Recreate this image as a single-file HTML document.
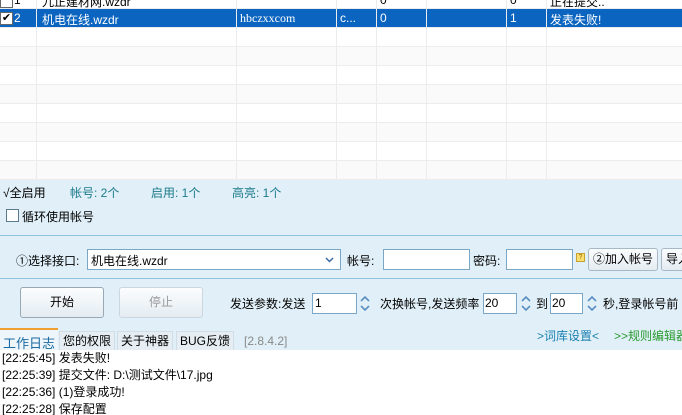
<!DOCTYPE html>
<html><head><meta charset="utf-8"><style>
*{margin:0;padding:0;box-sizing:border-box}
html,body{width:682px;height:415px;overflow:hidden}
body{background:#e1f0f8;font-family:"Liberation Sans","Noto Sans CJK SC",sans-serif;font-size:12px;color:#000;position:relative}
.a{position:absolute;white-space:nowrap}
.grid{position:absolute;left:0;top:0;width:682px;height:180px;background:#fff;overflow:hidden}
.row{position:absolute;left:0;width:682px;height:19px;border-bottom:1px solid #ececec}
.vl{position:absolute;top:0;width:1px;height:180px;background:#ececec}
.sel{background:#0a64c0;color:#fff}
.cb{position:absolute;width:13px;height:13px;border:1px solid #666;background:#fff}
.inp{position:absolute;height:21px;background:#fff;border:1px solid #7aa6c8}
.btn{position:absolute;border:1px solid #a8b8c4;border-radius:3px;background:linear-gradient(#fbfdfe,#e4ecf2);text-align:center}
.sp{position:absolute;width:14px;height:21px}
.tab{position:absolute;top:331px;height:20px;background:#e6eef3;border:1px solid #d0dde6;border-bottom:none;line-height:19px;padding:0 3px}
.log{position:absolute;left:0;top:350px;width:682px;height:65px;background:#fff;overflow:hidden}
.log div{height:17px;line-height:17px;padding-left:2px}
</style></head><body>
<div class="grid">
 <div class="row" style="top:-10px"></div>
 <div class="row sel" style="top:9px"></div>
 <div class="row" style="top:28px"></div>
 <div class="row" style="top:47px;background:#fafafa"></div>
 <div class="row" style="top:66px"></div>
 <div class="row" style="top:85px;background:#fafafa"></div>
 <div class="row" style="top:104px"></div>
 <div class="row" style="top:123px;background:#fafafa"></div>
 <div class="row" style="top:142px"></div>
 <div class="row" style="top:161px;background:#fafafa;height:19px"></div>
 <div class="vl" style="left:36px"></div><div class="vl" style="left:236px"></div><div class="vl" style="left:336px"></div><div class="vl" style="left:376px"></div><div class="vl" style="left:426px"></div><div class="vl" style="left:506px"></div><div class="vl" style="left:546px"></div>
 <div class="cb" style="left:0;top:-5px"></div>
 <div class="a" style="left:14px;top:-7px">1</div>
 <div class="a" style="left:42px;top:-7px">九正建材网.wzdr</div>
 <div class="a" style="left:380px;top:-7px">0</div>
 <div class="a" style="left:510px;top:-7px">0</div>
 <div class="a" style="left:550px;top:-7px">正在提交..</div>
 <div class="cb" style="left:0;top:12px;font-size:11px;line-height:11px;text-align:center;color:#000">✔</div>
 <div class="a" style="left:14px;top:11px;color:#fff">2</div>
 <div class="a" style="left:42px;top:11px;color:#fff">机电在线.wzdr</div>
 <div class="a" style="left:240px;top:11px;color:#fff;font-family:'Liberation Serif',serif">hbczxxcom</div>
 <div class="a" style="left:340px;top:11px;color:#fff">c...</div>
 <div class="a" style="left:380px;top:11px;color:#fff">0</div>
 <div class="a" style="left:510px;top:11px;color:#fff">1</div>
 <div class="a" style="left:550px;top:11px;color:#fff">发表失败!</div>
</div>
<div class="a" style="left:3px;top:184px">√全启用</div>
<div class="a" style="left:70px;top:184px;color:#1a7a8a">帐号: 2个</div>
<div class="a" style="left:151px;top:184px;color:#1a7a8a">启用: 1个</div>
<div class="a" style="left:232px;top:184px;color:#1a7a8a">高亮: 1个</div>
<div class="cb" style="left:6px;top:209px;border-color:#5a7a90"></div>
<div class="a" style="left:22px;top:208px">循环使用帐号</div>
<div class="a" style="left:0;top:235px;width:682px;height:1px;background:#8cc4dc"></div>
<div class="a" style="left:16px;top:252px">①选择接口:</div>
<div class="inp" style="left:87px;top:249px;width:254px;padding:2px 3px">机电在线.wzdr<svg style="position:absolute;right:6px;top:7px" width="9" height="6"><path d="M1 1L4.5 4.5L8 1" fill="none" stroke="#3a6aa8" stroke-width="1.5"/></svg></div>
<div class="a" style="left:347px;top:252px">帐号:</div>
<div class="inp" style="left:383px;top:249px;width:87px"></div>
<div class="a" style="left:473px;top:252px">密码:</div>
<div class="inp" style="left:506px;top:249px;width:67px"></div>
<div class="a" style="left:576px;top:253px;width:9px;height:9px;background:#f8e070;border:1px solid #c8a030;font-size:7px;line-height:7px;text-align:center;color:#a06000">?</div>
<div class="btn" style="left:588px;top:248px;width:70px;height:23px;line-height:21px">②加入帐号</div>
<div class="btn" style="left:661px;top:248px;width:30px;height:23px;line-height:21px;text-align:left;padding-left:4px">导入</div>
<div class="a" style="left:0;top:278px;width:682px;height:1px;background:#8cc4dc"></div>
<div class="btn" style="left:20px;top:287px;width:84px;height:31px;line-height:29px;border-color:#98a8b4">开始</div>
<div class="btn" style="left:119px;top:287px;width:84px;height:31px;line-height:29px;color:#999;border-color:#ccd6de">停止</div>
<div class="a" style="left:230px;top:295px">发送参数:发送</div>
<div class="inp" style="left:312px;top:293px;width:45px;padding:2px 2px">1</div>
<svg class="sp" style="left:358px;top:293px" viewBox="0 0 14 21"><path d="M3 8L7 4L11 8M3 13L7 17L11 13" fill="none" stroke="#5a8ec0" stroke-width="1.6"/></svg>
<div class="a" style="left:380px;top:295px">次换帐号,发送频率</div>
<div class="inp" style="left:483px;top:293px;width:34px;padding:2px 1px">20</div>
<svg class="sp" style="left:519px;top:293px" viewBox="0 0 14 21"><path d="M3 8L7 4L11 8M3 13L7 17L11 13" fill="none" stroke="#5a8ec0" stroke-width="1.6"/></svg>
<div class="a" style="left:536px;top:295px">到</div>
<div class="inp" style="left:550px;top:293px;width:33px;padding:2px 1px">20</div>
<svg class="sp" style="left:585px;top:293px" viewBox="0 0 14 21"><path d="M3 8L7 4L11 8M3 13L7 17L11 13" fill="none" stroke="#5a8ec0" stroke-width="1.6"/></svg>
<div class="a" style="left:603px;top:295px">秒,登录帐号前</div>
<div class="a" style="left:0;top:328px;width:58px;height:23px;background:#eef6fb;border-top:2px solid #f0a030"></div>
<div class="a" style="left:3px;top:333px;color:#1a6aa0;font-size:13px">工作日志</div>
<div class="tab" style="left:59px">您的权限</div>
<div class="tab" style="left:117px">关于神器</div>
<div class="tab" style="left:176px">BUG反馈</div>
<div class="a" style="left:244px;top:334px;color:#888">[2.8.4.2]</div>
<div class="a" style="left:537px;top:327px;color:#1a80b0">&gt;词库设置&lt;</div>
<div class="a" style="left:614px;top:327px;color:#2a9a30">&gt;&gt;规则编辑器</div>
<div class="log">
<div>[22:25:45] 发表失败!</div>
<div>[22:25:39] 提交文件: D:\测试文件\17.jpg</div>
<div>[22:25:36] (1)登录成功!</div>
<div>[22:25:28] 保存配置</div>
</div>
</body></html>
